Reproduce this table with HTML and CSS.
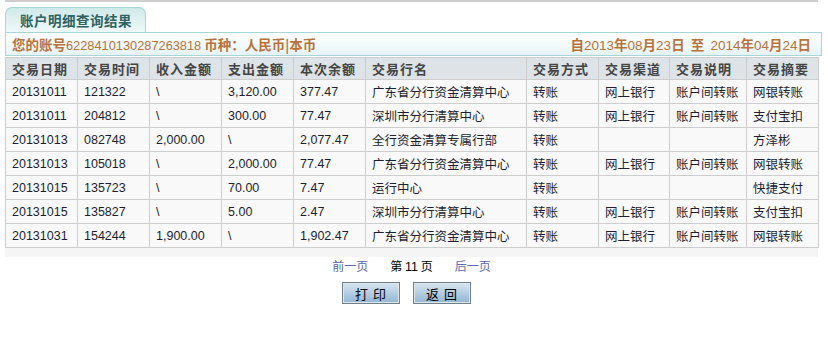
FILE: index.html
```html
<!DOCTYPE html>
<html lang="zh">
<head>
<meta charset="utf-8">
<title>账户明细查询结果</title>
<link rel="stylesheet" href="styles.css">
</head>
<body>
<div class="topline"></div>
<div class="wrap">
  <div class="tabs"><div class="tab">账户明细查询结果</div></div>
  <div class="infobar">
    <div class="acct">您的账号<span class="num">6228410130287263818</span> 币种：人民币|本币</div>
    <div class="range">自<span class="num">2013</span>年<span class="num">08</span>月<span class="num">23</span>日&nbsp;&nbsp;至&nbsp;&nbsp;<span class="num">2014</span>年<span class="num">04</span>月<span class="num">24</span>日</div>
  </div>
  <table class="grid">
    <colgroup>
      <col class="c72"><col class="c72"><col class="c72"><col class="c72"><col class="c72">
      <col class="c161"><col class="c72"><col class="c71"><col class="c77"><col class="c72">
    </colgroup>
    <thead>
      <tr><th>交易日期</th><th>交易时间</th><th>收入金额</th><th>支出金额</th><th>本次余额</th><th>交易行名</th><th>交易方式</th><th>交易渠道</th><th>交易说明</th><th>交易摘要</th></tr>
    </thead>
    <tbody>
      <tr><td>20131011</td><td>121322</td><td>\</td><td>3,120.00</td><td>377.47</td><td>广东省分行资金清算中心</td><td>转账</td><td>网上银行</td><td>账户间转账</td><td>网银转账</td></tr>
      <tr><td>20131011</td><td>204812</td><td>\</td><td>300.00</td><td>77.47</td><td>深圳市分行清算中心</td><td>转账</td><td>网上银行</td><td>账户间转账</td><td>支付宝扣</td></tr>
      <tr><td>20131013</td><td>082748</td><td>2,000.00</td><td>\</td><td>2,077.47</td><td>全行资金清算专属行部</td><td>转账</td><td></td><td></td><td>方泽彬</td></tr>
      <tr><td>20131013</td><td>105018</td><td>\</td><td>2,000.00</td><td>77.47</td><td>广东省分行资金清算中心</td><td>转账</td><td>网上银行</td><td>账户间转账</td><td>网银转账</td></tr>
      <tr><td>20131015</td><td>135723</td><td>\</td><td>70.00</td><td>7.47</td><td>运行中心</td><td>转账</td><td></td><td></td><td>快捷支付</td></tr>
      <tr><td>20131015</td><td>135827</td><td>\</td><td>5.00</td><td>2.47</td><td>深圳市分行清算中心</td><td>转账</td><td>网上银行</td><td>账户间转账</td><td>支付宝扣</td></tr>
      <tr><td>20131031</td><td>154244</td><td>1,900.00</td><td>\</td><td>1,902.47</td><td>广东省分行资金清算中心</td><td>转账</td><td>网上银行</td><td>账户间转账</td><td>网银转账</td></tr>
    </tbody>
  </table>
  <div class="band"></div>
  <div class="pager">
    <a class="link" href="#">前一页</a>
    <span class="cur">第 <span class="num">11</span> 页</span>
    <a class="link" href="#">后一页</a>
  </div>
  <div class="actions">
    <button class="btn" type="button">打 印</button>
    <button class="btn" type="button">返 回</button>
  </div>
</div>
</body>
</html>
```
FILE: styles.css
```css
* { box-sizing: border-box; }
html, body { margin: 0; padding: 0; background: #fff; }
body {
  font-family: "Noto Sans CJK SC", "Liberation Sans", sans-serif;
  font-size: 12px;
  color: #222;
  width: 828px;
  height: 338px;
  overflow: hidden;
}
.num { font-family: "Liberation Sans", "Noto Sans CJK SC", sans-serif; }
.topline {
  margin-left: 5px;
  width: 813px;
  height: 2px;
  background: #cfcfcf;
}
.wrap {
  margin-left: 5px;
  width: 817px;
}
.tabs {
  padding-top: 5px;
  height: 30px;
  display: flex;
  align-items: flex-end;
}
.tab {
  width: 141px;
  height: 25px;
  border: 1px solid #a6d6d6;
  border-bottom: none;
  border-radius: 7px 7px 0 0;
  background: linear-gradient(to bottom, #cfe9e9 0%, #e2f3f2 60%, #eef8f8 100%);
  color: #2f6262;
  font-weight: bold;
  font-size: 13.5px;
  line-height: 24px;
  padding-left: 14px;
  letter-spacing: 0.5px;
}
.infobar {
  height: 24px;
  border: 1px solid #a6d6d6;
  background: linear-gradient(to bottom, #ffffff 0%, #f3fafb 50%, #e5f3f6 100%);
  display: flex;
  justify-content: space-between;
  align-items: center;
  padding: 0 10px 0 6px;
  color: #b8733a;
  font-weight: bold;
  font-size: 13.5px;
}
.infobar .num { font-weight: normal; font-size: 12.8px; }
.range .num { font-size: 13.5px; }
.grid {
  width: 813px;
  border-collapse: collapse;
  table-layout: fixed;
  margin-top: 1px;
}
.c72 { width: 72px; }
.c161 { width: 161px; }
.c71 { width: 71px; }
.c77 { width: 77px; }
.grid th, .grid td {
  border: 1px solid #cdcdcd;
  text-align: left;
  white-space: nowrap;
  overflow: hidden;
  padding: 0 0 0 6px;
}
.grid th {
  height: 22px;
  background: #dde3e6;
  color: #444;
  font-weight: bold;
  font-size: 13px;
  letter-spacing: 1px;
}
.grid td {
  height: 24px;
  background: #f9f9f9;
  font-family: "Liberation Sans", "Noto Sans CJK SC", sans-serif;
  font-size: 12.5px;
  color: #1e1e2e;
}
.band {
  width: 813px;
  height: 9px;
  background: #f5f5f5;
}
.pager {
  width: 813px;
  height: 17px;
  display: flex;
  justify-content: center;
  align-items: center;
  gap: 22px;
  font-size: 12px;
}
.link { color: #5a6aae; text-decoration: none; }
.cur { color: #000; }
.cur .num { font-size: 12.5px; }
.actions {
  width: 803px;
  margin-top: 8px;
  display: flex;
  justify-content: center;
  gap: 13px;
}
.btn {
  width: 58px;
  height: 22px;
  border: 1px solid #6f7f88;
  outline: 1px solid #dfe6ea;
  outline-offset: -2px;
  background: linear-gradient(to bottom, #d6e6f2 0%, #b4cde2 50%, #93b6d2 100%);
  font-family: "Noto Sans CJK SC", sans-serif;
  font-size: 13px;
  color: #000;
  padding: 0;
  letter-spacing: 1px;
  cursor: pointer;
}
```
